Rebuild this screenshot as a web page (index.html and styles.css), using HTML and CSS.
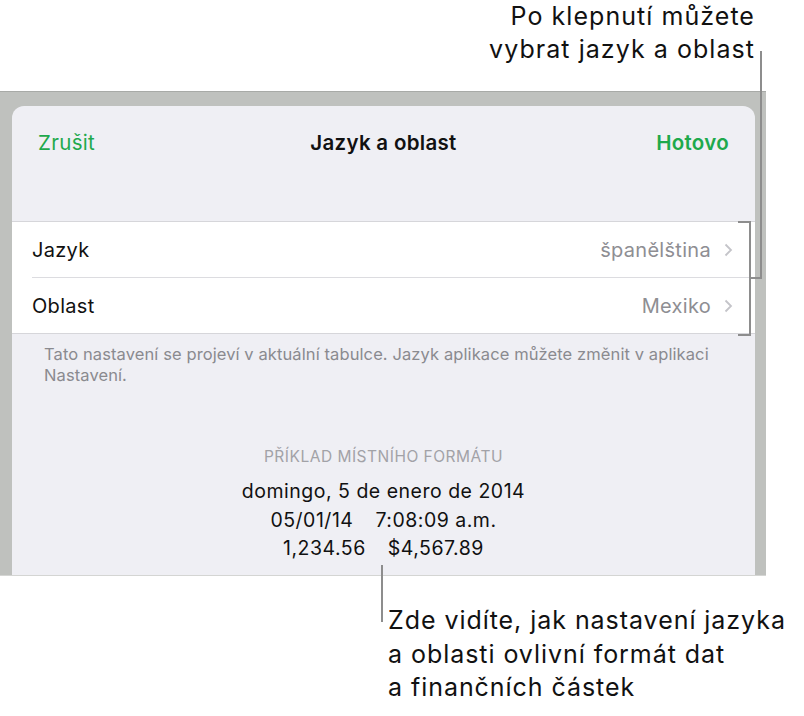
FILE: index.html
```html
<!DOCTYPE html>
<html lang="cs">

<head>
    <meta charset="UTF-8" />
    <meta name="viewport" content="width=device-width, initial-scale=1.0" />
    <title>Jazyk a oblast</title>
    <link rel="stylesheet" href="styles.css">
</head>

<body>
    <div class="stranka">
        <p class="popisekHorni">Po klepnutí můžete<br>vybrat jazyk a oblast</p>

        <div class="ramec">
            <div class="karta">
                <div class="listaNav">
                    <span class="tlacitko">Zrušit</span>
                    <span class="nadpis">Jazyk a oblast</span>
                    <span class="tlacitko hotovo">Hotovo</span>
                </div>

                <div class="seznam">
                    <div class="radek">
                        <span class="nazev">Jazyk</span>
                        <span class="hodnota">španělština</span>
                        <svg class="sipka" width="9" height="14" viewBox="0 0 9 14">
                            <path d="M1.5 1.5 L7 7 L1.5 12.5" fill="none" stroke="#c4c4c9" stroke-width="1.8" />
                        </svg>
                    </div>
                    <div class="radek">
                        <span class="nazev">Oblast</span>
                        <span class="hodnota">Mexiko</span>
                        <svg class="sipka" width="9" height="14" viewBox="0 0 9 14">
                            <path d="M1.5 1.5 L7 7 L1.5 12.5" fill="none" stroke="#c4c4c9" stroke-width="1.8" />
                        </svg>
                    </div>
                </div>

                <p class="poznamka">Tato nastavení se projeví v aktuální tabulce. Jazyk aplikace můžete změnit v aplikaci Nastavení.</p>

                <div class="priklad">
                    <p class="prikladNadpis">Příklad místního formátu</p>
                    <p>domingo, 5 de enero de 2014</p>
                    <p><span class="mezera">05/01/14</span>7:08:09 a.m.</p>
                    <p><span class="mezera">1,234.56</span>$4,567.89</p>
                </div>
            </div>
        </div>

        <p class="popisekDolni">Zde vidíte, jak nastavení jazyka<br>a oblasti ovlivní formát dat<br>a finančních částek</p>

        <!-- vodici cary popisku -->
        <div class="cara caraHorni"></div>
        <div class="cara caraSpoj"></div>
        <div class="zavorka"></div>
        <div class="cara caraDolni"></div>
    </div>
</body>

</html>
```

FILE: styles.css
```css
body {
    margin: 0;
    background: white;
    font-family: Inter, Roboto, "Liberation Sans", sans-serif;
    color: #111;
}

p {
    margin: 0;
}

.stranka {
    position: relative;
    width: 804px;
    height: 716px;
    overflow: hidden;
}

.popisekHorni {
    height: 91px;
    padding-right: 49px;
    text-align: right;
    font-size: 25px;
    line-height: 33px;
    letter-spacing: 1.05px;
}

.ramec {
    width: 743px;
    height: 469px;
    padding: 14px 11px 0 12px;
    background: #bfc1be;
    border-top: 1px solid #a8aaa7;
    border-bottom: 1px solid #d4d5d3;
    border-left: 1px solid #b0b2af;
    margin-left: -1px;
}

.karta {
    height: 469px;
    background: #efeff4;
    border-radius: 12px 12px 0 0;
}

.listaNav {
    display: flex;
    justify-content: space-between;
    align-items: center;
    height: 72px;
    padding: 0 26px;
    font-size: 20.5px;
    letter-spacing: 0.3px;
}

.tlacitko {
    color: #1ea94c;
    width: 100px;
}

.hotovo {
    font-weight: 600;
    text-align: right;
}

.nadpis {
    font-weight: 600;
    color: #111;
}

.seznam {
    margin-top: 43px;
    background: white;
    border-top: 1px solid #d6d6da;
    border-bottom: 1px solid #d6d6da;
}

.radek {
    display: flex;
    align-items: center;
    height: 55px;
    margin-left: 20px;
    padding-right: 22px;
    font-size: 20px;
    letter-spacing: 0.3px;
}

.radek + .radek {
    border-top: 1px solid #dcdce0;
}

.nazev {
    flex: 1;
}

.hodnota {
    color: #8e8e93;
    margin-right: 13px;
}

.poznamka {
    padding: 10px 30px 0 32px;
    font-size: 16.5px;
    line-height: 21px;
    letter-spacing: 0.1px;
    color: #8a8a8f;
}

.priklad {
    margin-top: 62px;
    text-align: center;
    font-size: 19.5px;
    line-height: 28.5px;
    letter-spacing: 0.5px;
}

.prikladNadpis {
    margin-bottom: 11px;
    font-size: 15.5px;
    line-height: 18px;
    letter-spacing: 0.5px;
    text-transform: uppercase;
    color: #a2a2a7;
}

.mezera {
    margin-right: 22px;
}

.popisekDolni {
    margin-top: 28px;
    padding-left: 388px;
    font-size: 25px;
    line-height: 33.5px;
    letter-spacing: 0.95px;
}

.cara {
    position: absolute;
    background: #8d8d8d;
}

.caraHorni {
    left: 760px;
    top: 51px;
    width: 2px;
    height: 228px;
}

.caraSpoj {
    left: 749px;
    top: 277px;
    width: 13px;
    height: 2px;
}

.zavorka {
    position: absolute;
    left: 738px;
    top: 221px;
    width: 11px;
    height: 111px;
    border: 2px solid #8d8d8d;
    border-left: none;
}

.caraDolni {
    left: 381px;
    top: 565px;
    width: 2px;
    height: 57px;
}
```
